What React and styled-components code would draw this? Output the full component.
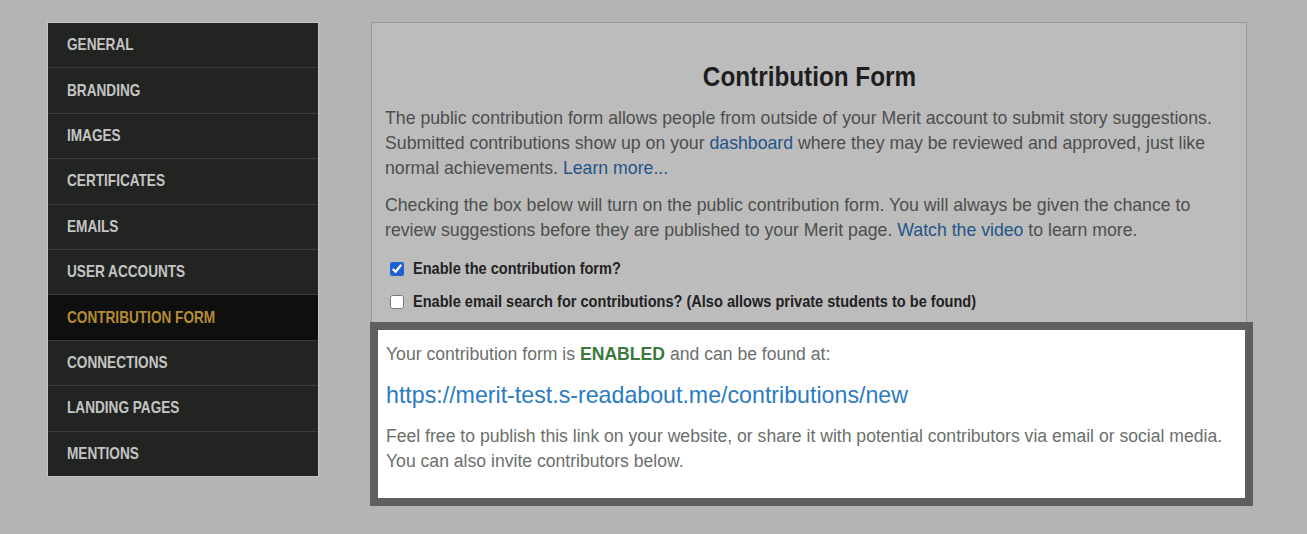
import React from 'react';
import styled, { createGlobalStyle } from 'styled-components';

const GlobalStyle = createGlobalStyle`
	body {
		margin: 0;
		background: #b4b4b4;
		font-family: 'Liberation Sans', Arial, sans-serif;
	}
`;

const navItems = [
	'General',
	'Branding',
	'Images',
	'Certificates',
	'Emails',
	'User Accounts',
	'Contribution Form',
	'Connections',
	'Landing Pages',
	'Mentions',
];

function App() {
	return (
		<>
			<GlobalStyle />
			<Page>
				<Sidebar>
					{navItems.map((item) => (
						<NavItem key={item} active={item === 'Contribution Form'}>
							<Narrow scale={0.82}>{item}</Narrow>
						</NavItem>
					))}
				</Sidebar>
				<Panel>
					<Title>
						<Narrow scale={0.9} center>
							Contribution Form
						</Narrow>
					</Title>
					<Text>
						The public contribution form allows people from outside of your Merit account to submit story
						suggestions. Submitted contributions show up on your <Link>dashboard</Link> where they may be
						reviewed and approved, just like normal achievements. <Link>Learn more...</Link>
					</Text>
					<Text>
						Checking the box below will turn on the public contribution form. You will always be given the
						chance to review suggestions before they are published to your Merit page.{' '}
						<Link>Watch the video</Link> to learn more.
					</Text>
					<Checks>
						<CheckRow>
							<Checkbox type="checkbox" defaultChecked />
							<Narrow scale={0.91}>Enable the contribution form?</Narrow>
						</CheckRow>
						<CheckRow>
							<Checkbox type="checkbox" />
							<Narrow scale={0.91}>
								Enable email search for contributions? (Also allows private students to be found)
							</Narrow>
						</CheckRow>
					</Checks>
					<Spotlight>
						<SpotText>
							Your contribution form is <Enabled>ENABLED</Enabled> and can be found at:
						</SpotText>
						<Url>https://merit-test.s-readabout.me/contributions/new</Url>
						<SpotText>
							Feel free to publish this link on your website, or share it with potential contributors via
							email or social media.
							<br />
							You can also invite contributors below.
						</SpotText>
					</Spotlight>
				</Panel>
			</Page>
		</>
	);
}

export default App;

const Page = styled.div`
	display: flex;
	align-items: flex-start;
	gap: 52px;
	padding: 22px 0 0 47px;
	height: 512px;
	overflow: hidden;
`;

// squeezes bold sans into the condensed face used for headings
const Narrow = styled.span`
	display: inline-block;
	white-space: nowrap;
	transform: scaleX(${(p) => p.scale});
	transform-origin: ${(p) => (p.center ? 'center' : 'left')};
`;

const Sidebar = styled.nav`
	width: 270px;
	flex-shrink: 0;
	background: #222422;
	border: 1px solid #c6c6c6;
	display: flex;
	flex-direction: column;
`;

const NavItem = styled.div`
	height: 44.4px;
	display: flex;
	align-items: center;
	padding-left: 19px;
	font-weight: bold;
	font-size: 16.6px;
	text-transform: uppercase;
	color: ${(p) => (p.active ? '#b48d32' : '#c4c4c4')};
	background: ${(p) => (p.active ? '#0f0f0f' : 'transparent')};
	border-bottom: 1px solid #3a3c3a;
	&:last-child {
		border-bottom: none;
	}
`;

const Panel = styled.section`
	width: 848px;
	flex-shrink: 0;
	background: #bcbcbc;
	border: 1px solid #999999;
	border-bottom: none;
	padding: 30px 13px 0 13px;
`;

const Title = styled.h1`
	margin: 6px 0 11px;
	text-align: center;
	font-weight: bold;
	font-size: 27px;
	line-height: 36px;
	color: #1e1e1e;
`;

const Text = styled.p`
	margin: 0;
	font-size: 17.7px;
	line-height: 25px;
	color: #4c4f4c;
	& + & {
		margin-top: 12px;
	}
`;

const Link = styled.a`
	color: #265487;
	cursor: pointer;
`;

const Checks = styled.div`
	margin-top: 9px;
	display: flex;
	flex-direction: column;
`;

const CheckRow = styled.label`
	display: flex;
	align-items: center;
	gap: 9px;
	height: 33px;
	padding-left: 5px;
	font-weight: bold;
	font-size: 16px;
	color: #222;
`;

const Checkbox = styled.input`
	width: 14px;
	height: 14px;
	margin: 0;
	flex-shrink: 0;
	accent-color: #1f5fd0;
`;

const Spotlight = styled.div`
	margin: 4px -20px 0 -15px;
	border: 8px solid #5f5f5f;
	background: #ffffff;
	padding: 12px 8px 24px;
`;

const SpotText = styled.p`
	margin: 0;
	font-size: 17.6px;
	line-height: 25px;
	color: #6b6f6b;
`;

const Enabled = styled.strong`
	color: #3c7a3c;
`;

const Url = styled.a`
	display: block;
	margin: 13px 0 14px;
	font-size: 23.2px;
	line-height: 30px;
	color: #2b7bbf;
	cursor: pointer;
`;
